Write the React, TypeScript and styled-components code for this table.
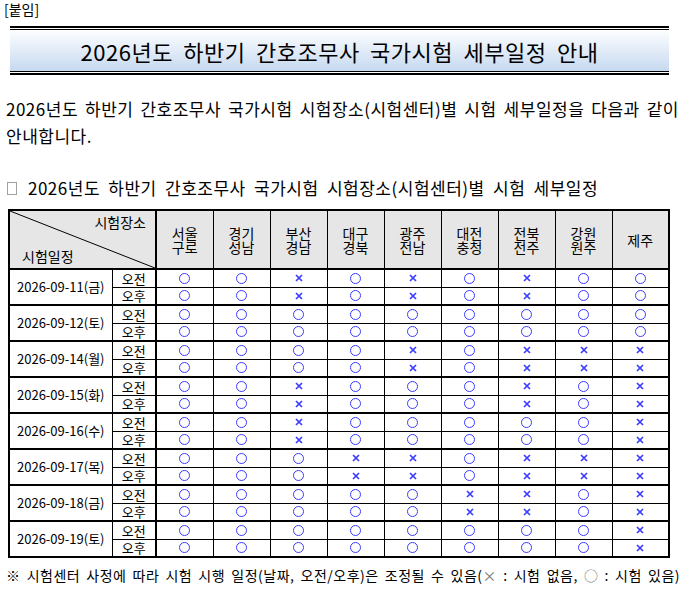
import React from 'react';
import styled, { createGlobalStyle } from 'styled-components';

const GlobalStyle = createGlobalStyle`
  html, body { margin: 0; padding: 0; background: #fff; }
  body {
    font-family: "Noto Sans CJK KR", "Noto Sans", sans-serif;
    color: #000;
  }
`;

const Page = styled.div`
  width: 682px;
  height: 590px;
  overflow: hidden;
  display: flex;
  flex-direction: column;
`;

const Attach = styled.div`
  font-size: 14px;
  line-height: 18px;
  height: 26px;
  padding: 0 0 0 4px;
  box-sizing: border-box;
`;

const TitleOuter = styled.div`
  margin: 0 13px 0 10px;
  border-top: 2px solid #000;
  border-bottom: 2px solid #000;
  padding: 1px 0;
`;

const TitleInner = styled.div`
  border-top: 1px solid #000;
  border-bottom: 1px solid #000;
  height: 41px;
  background: linear-gradient(#fdfeff, #c6d9f0);
  display: flex;
  align-items: center;
  justify-content: center;
  font-size: 22px;
  letter-spacing: 0.5px;
  word-spacing: 5px;
`;

const Paragraph = styled.p`
  margin: 20px 3px 0 6px;
  font-size: 17px;
  letter-spacing: 0.5px;
  line-height: 27px;
  text-align: justify;
  word-break: keep-all;
`;

const Heading = styled.div`
  margin: 28px 0 0 7px;
  font-size: 17px;
  letter-spacing: 0.5px;
  line-height: 22px;
  word-spacing: 4px;
  display: flex;
  align-items: center;
`;

const Box = styled.span`
  display: inline-block;
  width: 10px;
  height: 13px;
  border: 1px solid #a0a0a0;
  margin-right: 11px;
  box-sizing: border-box;
`;

const Table = styled.table`
  margin: 10px 0 0 8px;
  width: 660px;
  border-collapse: collapse;
  table-layout: fixed;
  border: 2px solid #000;
  font-size: 13px;
`;

const HeadCell = styled.th<{ $thickLeft?: boolean }>`
  background: #e6e6e6;
  border: 1px solid #000;
  border-bottom: 2px solid #000;
  ${(p) => (p.$thickLeft ? 'border-left: 2px solid #000;' : '')}
  font-weight: normal;
  font-size: 14px;
  line-height: 14px;
  padding: 0;
  text-align: center;
  vertical-align: middle;
`;

const DiagCell = styled.th`
  background: #e6e6e6;
  border: 1px solid #000;
  border-bottom: 2px solid #000;
  border-right: 2px solid #000;
  font-weight: normal;
  font-size: 14px;
  padding: 0;
  position: relative;
  height: 57px;
`;

const DiagLine = styled.svg`
  position: absolute;
  inset: 0;
  width: 100%;
  height: 100%;
`;

const DiagLabels = styled.div`
  position: relative;
  height: 57px;
  display: flex;
  flex-direction: column;
  justify-content: space-between;
  padding: 2px 9px 3px 12px;
  box-sizing: border-box;
  line-height: 18px;
`;

const TopLabel = styled.span`
  align-self: flex-end;
`;

const BottomLabel = styled.span`
  align-self: flex-start;
`;

const Row = styled.tr`
  height: 17.5px;
`;

const DateCell = styled.td<{ $first?: boolean }>`
  border: 1px solid #000;
  ${(p) => (p.$first ? 'border-top: 2px solid #000;' : '')}
  text-align: center;
  vertical-align: middle;
  padding: 0 0 1px;
  line-height: 16px;
`;

const HalfCell = styled.td<{ $first?: boolean }>`
  border: 1px solid #000;
  border-right: 2px solid #000;
  ${(p) => (p.$first ? 'border-top: 2px solid #000;' : '')}
  text-align: center;
  padding: 0;
  line-height: 15px;
  height: 16.5px;
`;

const MarkCell = styled.td<{ $first?: boolean }>`
  border: 1px solid #000;
  ${(p) => (p.$first ? 'border-top: 2px solid #000;' : '')}
  text-align: center;
  vertical-align: middle;
  padding: 0;
  line-height: 0;
`;

const Circle = styled.span`
  display: inline-block;
  width: 11px;
  height: 11px;
  border: 1px solid #3c3cff;
  border-radius: 50%;
  box-sizing: border-box;
`;

const Cross = styled.svg`
  display: inline-block;
  width: 8px;
  height: 8px;
`;

const Note = styled.div`
  margin: 8px 0 0 6px;
  font-size: 14px;
  letter-spacing: 0.5px;
  line-height: 18px;
  word-spacing: 2.5px;
  white-space: nowrap;
`;

const Gray = styled.span`
  color: #7a7a7a;
`;

const places: string[][] = [
  ['서울', '구로'],
  ['경기', '성남'],
  ['부산', '경남'],
  ['대구', '경북'],
  ['광주', '전남'],
  ['대전', '충청'],
  ['전북', '전주'],
  ['강원', '원주'],
  ['제주'],
];

const days: [string, string][] = [
  ['2026-09-11(금)', 'OOXOXOXOO'],
  ['2026-09-12(토)', 'OOOOOOOOO'],
  ['2026-09-14(월)', 'OOOOXOXXX'],
  ['2026-09-15(화)', 'OOXOOOXOX'],
  ['2026-09-16(수)', 'OOXOOOOOX'],
  ['2026-09-17(목)', 'OOOXXOXXX'],
  ['2026-09-18(금)', 'OOOOOXXOX'],
  ['2026-09-19(토)', 'OOOOOOOOX'],
];

const Mark = ({ v }: { v: string }) =>
  v === 'O' ? (
    <Circle />
  ) : (
    <Cross viewBox="0 0 8 8">
      <path d="M1 1 L7 7 M7 1 L1 7" stroke="#3c3cff" strokeWidth="1.7" />
    </Cross>
  );

export default function App() {
  return (
    <Page>
      <GlobalStyle />
      <Attach>[붙임]</Attach>
      <TitleOuter>
        <TitleInner>2026년도 하반기 간호조무사 국가시험 세부일정 안내</TitleInner>
      </TitleOuter>
      <Paragraph>
        2026년도 하반기 간호조무사 국가시험 시험장소(시험센터)별 시험 세부일정을 다음과 같이 안내합니다.
      </Paragraph>
      <Heading>
        <Box />
        2026년도 하반기 간호조무사 국가시험 시험장소(시험센터)별 시험 세부일정
      </Heading>
      <Table>
        <colgroup>
          <col style={{ width: 103 }} />
          <col style={{ width: 44 }} />
          {places.map((_, i) => (
            <col key={i} style={{ width: 57 }} />
          ))}
        </colgroup>
        <thead>
          <tr>
            <DiagCell colSpan={2}>
              <DiagLine viewBox="0 0 100 100" preserveAspectRatio="none">
                <line x1="0" y1="0" x2="100" y2="100" stroke="#000" strokeWidth="1" vectorEffect="non-scaling-stroke" />
              </DiagLine>
              <DiagLabels>
                <TopLabel>시험장소</TopLabel>
                <BottomLabel>시험일정</BottomLabel>
              </DiagLabels>
            </DiagCell>
            {places.map((p, i) => (
              <HeadCell key={i} $thickLeft={i === 0}>
                {p[0]}
                {p[1] && (
                  <>
                    <br />
                    {p[1]}
                  </>
                )}
              </HeadCell>
            ))}
          </tr>
        </thead>
        <tbody>
          {days.map(([date, marks]) => (
            <React.Fragment key={date}>
              <Row>
                <DateCell rowSpan={2} $first>
                  {date}
                </DateCell>
                <HalfCell $first>오전</HalfCell>
                {marks.split('').map((m, i) => (
                  <MarkCell key={i} $first>
                    <Mark v={m} />
                  </MarkCell>
                ))}
              </Row>
              <Row>
                <HalfCell>오후</HalfCell>
                {marks.split('').map((m, i) => (
                  <MarkCell key={i}>
                    <Mark v={m} />
                  </MarkCell>
                ))}
              </Row>
            </React.Fragment>
          ))}
        </tbody>
      </Table>
      <Note>
        ※ 시험센터 사정에 따라 시험 시행 일정(날짜, 오전/오후)은 조정될 수 있음(<Gray>×</Gray> : 시험 없음, <Gray>○</Gray> : 시험 있음)
      </Note>
    </Page>
  );
}
